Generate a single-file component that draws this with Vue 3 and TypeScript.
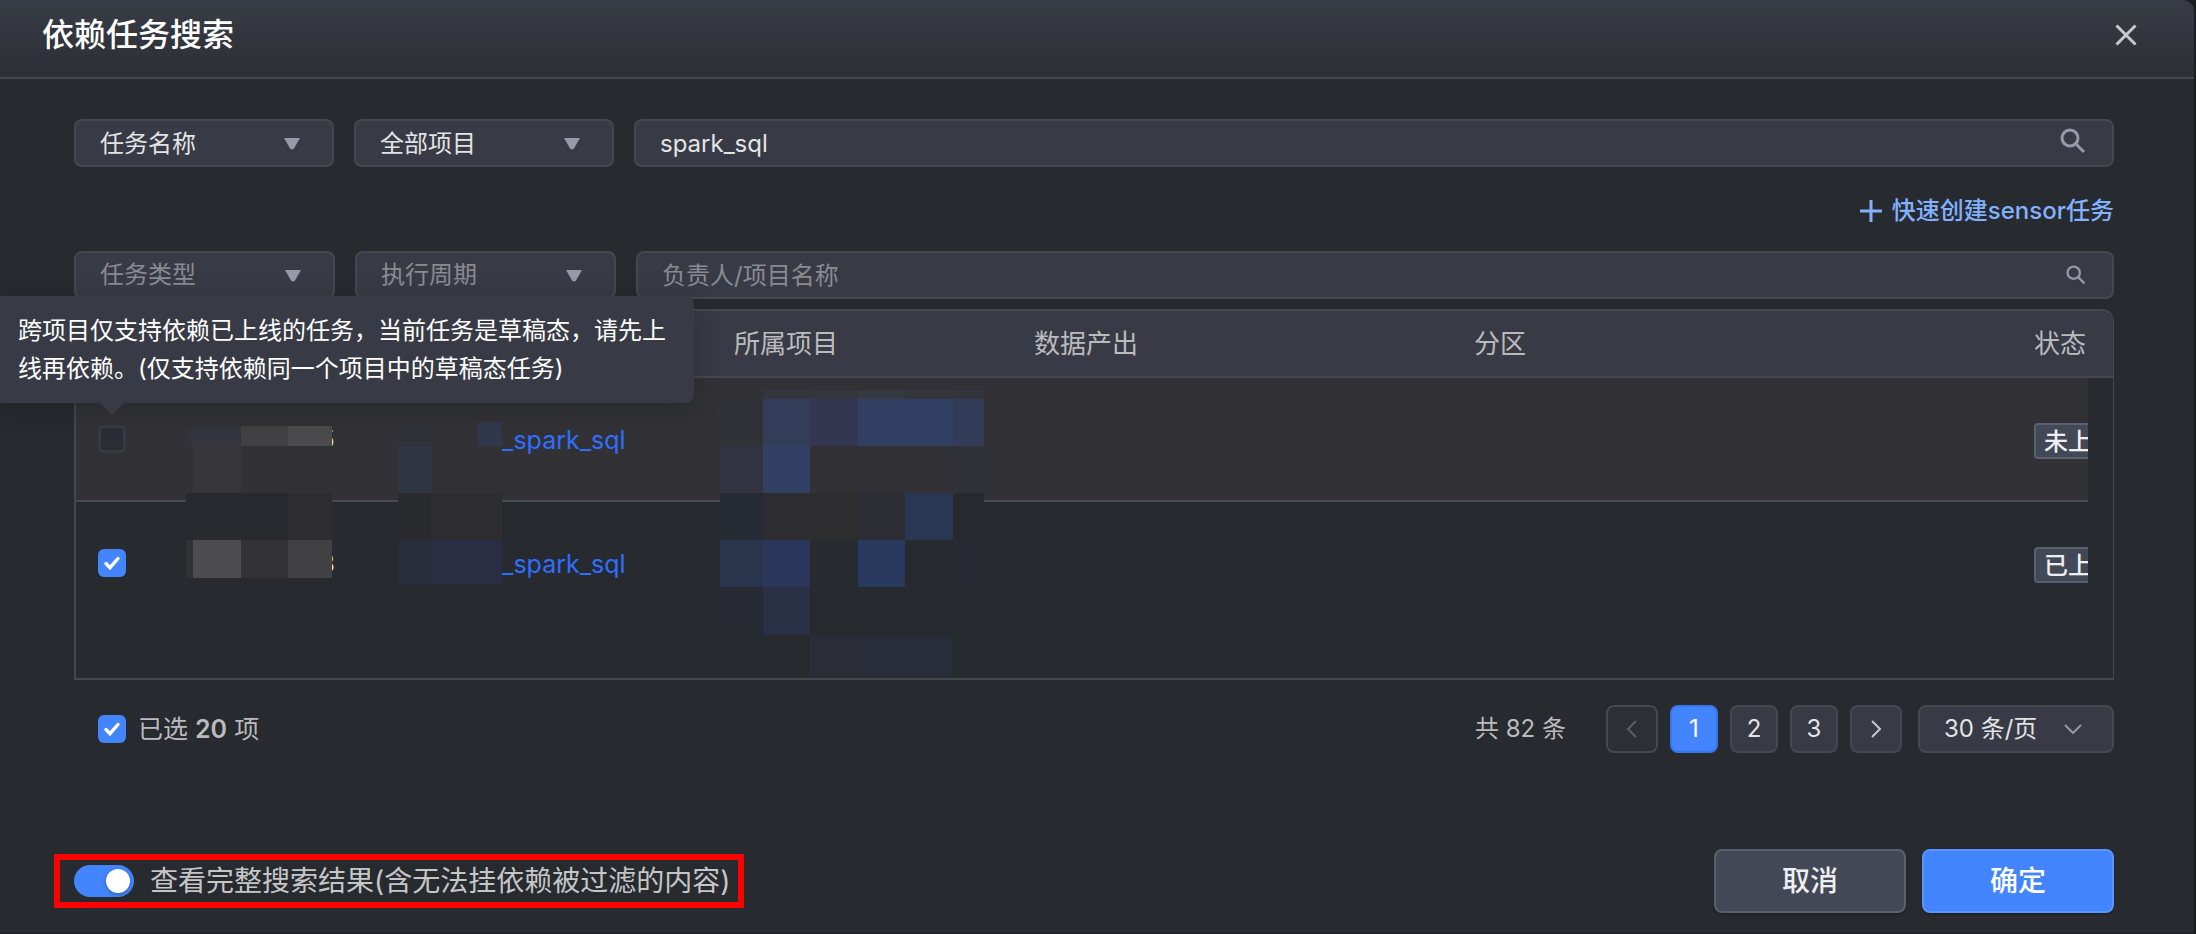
<script setup lang="ts">
import { ref } from 'vue'

interface TaskRow {
  id: string
  name: string
  status: string
  checked: boolean
  disabled: boolean
}

type Block = [x: number, y: number, w: number, h: number, fill: string]

const keyword = ref('spark_sql')
const owner = ref('')
const allChecked = ref(true)
const showAll = ref(true)
const currentPage = ref(1)
const pages = [1, 2, 3]

const rows = ref<TaskRow[]>([
  { id: '5', name: '_spark_sql', status: '未上线', checked: false, disabled: true },
  { id: '8', name: '_spark_sql', status: '已上线', checked: true, disabled: false },
])

// Mosaic blocks that hide the private parts of the rows: x, y, width, height, colour
const mosaic: Block[] = [
  [110, 115, 5, 20, '#343438'],
  [115, 115, 50, 20, '#33353e'],
  [165, 115, 47, 20, '#414144'],
  [212, 115, 44, 20, '#4b4b4e'],
  [110, 135, 7, 47, '#323236'],
  [117, 135, 48, 47, '#37363a'],
  [165, 135, 91, 47, '#323236'],
  [110, 182, 102, 47, '#272a2e'],
  [212, 182, 44, 47, '#2d2d30'],
  [110, 229, 7, 38, '#323235'],
  [117, 229, 48, 38, '#4c4c4e'],
  [165, 229, 47, 38, '#333335'],
  [212, 229, 44, 38, '#414143'],
  [322, 111, 33, 24, '#303239'],
  [355, 111, 47, 24, '#323236'],
  [402, 111, 24, 24, '#31374d'],
  [322, 135, 33, 47, '#2f3543'],
  [355, 135, 71, 47, '#323236'],
  [322, 182, 33, 47, '#292b2e'],
  [355, 182, 71, 47, '#2d2d30'],
  [322, 229, 33, 44, '#282d3b'],
  [355, 229, 71, 44, '#2a2e44'],
  [687, 79, 47, 9, '#33363c'],
  [734, 79, 48, 9, '#33353b'],
  [782, 79, 47, 9, '#373a43'],
  [829, 79, 48, 9, '#34363c'],
  [877, 79, 31, 9, '#33343c'],
  [644, 88, 43, 47, '#303238'],
  [687, 88, 47, 47, '#323d5a'],
  [734, 88, 48, 47, '#333751'],
  [782, 88, 95, 47, '#313f63'],
  [877, 88, 31, 47, '#323c59'],
  [644, 135, 43, 47, '#313440'],
  [687, 135, 47, 47, '#314063'],
  [734, 135, 143, 47, '#323236'],
  [877, 135, 31, 47, '#30323a'],
  [644, 182, 43, 47, '#272b33'],
  [687, 182, 47, 47, '#2d2c30'],
  [734, 182, 48, 47, '#2e2e31'],
  [782, 182, 47, 47, '#2c2d35'],
  [829, 182, 48, 47, '#293654'],
  [877, 182, 31, 47, '#272a2e'],
  [644, 229, 43, 47, '#29354c'],
  [687, 229, 47, 47, '#2a375b'],
  [782, 229, 47, 47, '#2a3a5f'],
  [877, 229, 31, 47, '#282b34'],
  [644, 276, 43, 44, '#272a32'],
  [687, 276, 47, 48, '#2a3146'],
  [734, 324, 48, 41, '#2a2d38'],
  [782, 324, 95, 41, '#282d3a'],
]
</script>

<template>
  <div class="backdrop">
    <section class="dialog" role="dialog" aria-labelledby="dialog-title">
      <header class="head">
        <h1 id="dialog-title">依赖任务搜索</h1>
        <button class="close" type="button" aria-label="关闭">
          <svg viewBox="0 0 24 24" width="24" height="24"><path d="M2.5 2.5l19 19M21.5 2.5l-19 19" /></svg>
        </button>
      </header>

      <main class="body">
        <div class="filters">
          <div class="pick">
            <select aria-label="搜索字段"><option>任务名称</option></select>
            <svg class="caret" viewBox="0 0 16 12" width="16" height="12"><path d="M0 0h16L10 10.500q-2 2-4 0z" /></svg>
          </div>
          <div class="pick">
            <select aria-label="项目"><option>全部项目</option></select>
            <svg class="caret" viewBox="0 0 16 12" width="16" height="12"><path d="M0 0h16L10 10.500q-2 2-4 0z" /></svg>
          </div>
          <div class="search">
            <input v-model="keyword" type="text" aria-label="任务名称" />
            <button type="button" aria-label="搜索" class="big">
              <svg viewBox="0 0 26 26" width="26" height="26"><circle cx="10" cy="10" r="8" /><path d="M15.800 15.800l8.200 8.200" /></svg>
            </button>
          </div>
        </div>

        <div class="create">
          <a href="#">
            <svg viewBox="0 0 22 22" width="22" height="22"><path d="M11 0v22M0 11h22" /></svg>
            <span>快速创建sensor任务</span>
          </a>
        </div>

        <div class="filters sub">
          <div class="pick">
            <select aria-label="任务类型"><option>任务类型</option></select>
            <svg class="caret" viewBox="0 0 16 12" width="16" height="12"><path d="M0 0h16L10 10.500q-2 2-4 0z" /></svg>
          </div>
          <div class="pick">
            <select aria-label="执行周期"><option>执行周期</option></select>
            <svg class="caret" viewBox="0 0 16 12" width="16" height="12"><path d="M0 0h16L10 10.500q-2 2-4 0z" /></svg>
          </div>
          <div class="search">
            <input v-model="owner" type="text" placeholder="负责人/项目名称" aria-label="负责人/项目名称" />
            <button type="button" aria-label="搜索">
              <svg viewBox="0 0 26 26" width="20" height="20"><circle cx="10" cy="10" r="8" /><path d="M15.800 15.800l8.200 8.200" /></svg>
            </button>
          </div>
        </div>

        <div class="table-wrap">
          <table>
            <colgroup>
              <col class="c-check" /><col class="c-id" /><col class="c-name" /><col class="c-project" />
              <col class="c-output" /><col class="c-part" /><col class="c-status" /><col class="c-gutter" />
            </colgroup>
            <thead>
              <tr>
                <th></th><th></th><th></th>
                <th scope="col">所属项目</th>
                <th scope="col">数据产出</th>
                <th scope="col">分区</th>
                <th scope="col">状态</th>
                <th></th>
              </tr>
            </thead>
            <tbody>
              <tr v-for="row in rows" :key="row.id" :class="{ hover: row.disabled }">
                <td class="check">
                  <input v-model="row.checked" type="checkbox" :disabled="row.disabled" aria-label="选择任务" />
                </td>
                <td class="id">{{ row.id }}</td>
                <td class="name"><a href="#">{{ row.name }}</a></td>
                <td></td>
                <td></td>
                <td></td>
                <td class="status"><span class="tag">{{ row.status }}</span></td>
                <td class="gutter"></td>
              </tr>
            </tbody>
          </table>

          <svg class="mosaic" viewBox="0 0 908 367" width="908" height="367" shape-rendering="crispEdges" aria-hidden="true">
            <rect v-for="(b, i) in mosaic" :key="i" :x="b[0]" :y="b[1]" :width="b[2]" :height="b[3]" :fill="b[4]" />
          </svg>

          <div class="tip" role="tooltip">
            跨项目仅支持依赖已上线的任务，当前任务是草稿态，请先上线再依赖。(仅支持依赖同一个项目中的草稿态任务)
          </div>
        </div>

        <div class="bar">
          <label class="picked">
            <input v-model="allChecked" type="checkbox" />
            <span>已选 <b>20</b> 项</span>
          </label>
          <nav class="pager" aria-label="分页">
            <span class="total">共 82 条</span>
            <button type="button" class="arrow" disabled aria-label="上一页">
              <svg viewBox="0 0 12 18" width="12" height="18"><path d="M10 1L2 9l8 8" /></svg>
            </button>
            <button
              v-for="p in pages"
              :key="p"
              type="button"
              :class="{ on: p === currentPage }"
              @click="currentPage = p"
            >{{ p }}</button>
            <button type="button" class="arrow" aria-label="下一页">
              <svg viewBox="0 0 12 18" width="12" height="18"><path d="M2 1l8 8-8 8" /></svg>
            </button>
            <div class="pick size">
              <select aria-label="每页条数"><option>30 条/页</option></select>
              <svg class="chev" viewBox="0 0 18 10" width="18" height="10"><path d="M1 1l8 8 8-8" /></svg>
            </div>
          </nav>
        </div>

        <footer class="foot">
          <label class="toggle">
            <input v-model="showAll" type="checkbox" role="switch" />
            <span>查看完整搜索结果(含无法挂依赖被过滤的内容)</span>
          </label>
          <div class="actions">
            <button type="button">取消</button>
            <button type="button" class="primary">确定</button>
          </div>
        </footer>
      </main>
    </section>
  </div>
</template>

<style>
body {
  margin: 0;
  background: #1c1d21;
}
</style>

<style scoped>
* {
  box-sizing: border-box;
}

.backdrop {
  min-height: 100vh;
  padding: 0 2px 1px 0;
  display: flex;
  background: #1c1d21;
  overflow: hidden;
  font-family: Inter, "Noto Sans CJK SC", sans-serif;
  font-size: 24px;
  line-height: 36px;
  color: #e3e4e6;
}

.dialog {
  flex: 1;
  min-width: 0;
  background: #272a2e;
  border-radius: 0 12px 0 0;
}

button,
select,
input {
  font: inherit;
  color: inherit;
  margin: 0;
}

button {
  cursor: pointer;
  padding: 0;
}

svg {
  display: block;
  fill: none;
}

.head {
  height: 79px;
  padding: 0 56px 7px 42px;
  display: flex;
  align-items: center;
  justify-content: space-between;
  border-bottom: 2px solid #444850;
  border-radius: 0 12px 0 0;
  background: linear-gradient(#383c46, #2c2f34);
}

h1 {
  margin: 0;
  font-size: 32px;
  line-height: 48px;
  font-weight: 500;
  color: #fff;
}

.close {
  border: 0;
  background: none;
  stroke: #c8c9cc;
  stroke-width: 3;
}

.body {
  padding: 40px 80px 20px 74px;
}

.filters {
  display: flex;
  gap: 20px;
}

.pick {
  display: grid;
  align-items: center;
  flex: 0 0 260px;
}

.sub .pick {
  flex-basis: 261px;
}

.pick > * {
  grid-area: 1 / 1;
}

.pick select {
  appearance: none;
  width: 100%;
  height: 48px;
  padding: 2px 24px 0;
  border: 2px solid #444850;
  border-radius: 8px;
  background: #383b45;
  outline: none;
}

.sub .pick select {
  padding-top: 0;
  color: #898b92;
}

.caret {
  justify-self: end;
  margin: 2px 34px 0 0;
  fill: #9799a8;
  pointer-events: none;
}

.search {
  flex: 1;
  display: flex;
  align-items: center;
  height: 48px;
  padding: 0 26px 0 24px;
  border: 2px solid #444850;
  border-radius: 8px;
  background: #383b45;
}

.search input {
  flex: 1;
  min-width: 0;
  padding: 2px 0 0;
  border: 0;
  outline: 0;
  background: none;
}

.search input::placeholder {
  color: #898b92;
  opacity: 1;
}

.search button {
  border: 0;
  background: none;
  stroke: #9799a8;
  stroke-width: 3;
}

.search .big {
  padding-bottom: 4px;
}

.create {
  display: flex;
  justify-content: flex-end;
  padding: 26px 0 22px;
}

.create a {
  display: flex;
  align-items: center;
  gap: 10px;
  color: #82b1ff;
  font-weight: 500;
  text-decoration: none;
}

.create svg {
  stroke: #82b1ff;
  stroke-width: 3;
}

.table-wrap {
  position: relative;
  margin-top: 10px;
  padding-bottom: 54px;
  border: 2px solid #444850;
  border-right-width: 1px;
  border-radius: 12px 12px 0 0;
}

table {
  width: 100%;
  table-layout: fixed;
  border-collapse: separate;
  border-spacing: 0;
}

.c-check { width: 92px; }
.c-id { width: 212px; }
.c-name { width: 330px; }
.c-project { width: 300px; }
.c-part { width: 560px; }
.c-status { width: 78px; }
.c-gutter { width: 25px; }

th {
  height: 67px;
  padding: 0 0 0 24px;
  text-align: left;
  font-size: 26px;
  font-weight: 400;
  color: #babbbe;
  white-space: nowrap;
  background: #383b45;
  border-bottom: 2px solid #444850;
}

th:last-child {
  padding: 0;
  border-top-right-radius: 10px;
}

td {
  height: 122px;
  padding: 0;
  white-space: nowrap;
  overflow: hidden;
}

.hover td {
  height: 124px;
  background: #323236;
  border-bottom: 2px solid #444b54;
}

.hover td.gutter {
  background: #272a2e;
  border: 0;
}

.check {
  padding-left: 22px;
}

td.id {
  padding: 2px 0 0 152px;
}

td.name {
  padding: 2px 0 0 122px;
}

.name a {
  font-size: 25px;
  color: #2f6fff;
  text-decoration: none;
}

td.status {
  padding: 4px 0 0 24px;
}

.tag {
  display: block;
  width: 92px;
  height: 36px;
  padding: 0 8px;
  line-height: 34px;
  border: 2px solid #596070;
  border-radius: 4px;
  background: #434856;
  color: #eeeff1;
  font-weight: 500;
}

input[type="checkbox"] {
  appearance: none;
  display: block;
  flex: none;
  width: 28px;
  height: 28px;
  border: 3px solid #373b40;
  border-radius: 6px;
  background: #2a2d35;
}

input[type="checkbox"]:checked {
  border: 0;
  background: #4285ff url("data:image/svg+xml,%3Csvg xmlns='http://www.w3.org/2000/svg' viewBox='0 0 28 28'%3E%3Cpath d='M8 14.500l4 4.200 8-9.200' fill='none' stroke='white' stroke-width='3.400' stroke-linecap='round'/%3E%3C/svg%3E");
}

.mosaic {
  position: absolute;
  left: 0;
  top: 0;
  pointer-events: none;
}

.tip {
  position: absolute;
  left: -76px;
  top: -15px;
  width: 694px;
  padding: 16px 24px 15px 18px;
  line-height: 38px;
  border-radius: 0 8px 8px 0;
  background: #383b45;
  color: #fff;
  box-shadow: 0 6px 24px rgba(20, 24, 28, 0.3);
}

.tip::after {
  content: "";
  position: absolute;
  left: 100px;
  top: 100%;
  border: 12px solid transparent;
  border-top-color: #383b45;
  border-bottom: 0;
}

.bar {
  display: flex;
  align-items: center;
  justify-content: space-between;
  margin-top: 25px;
}

.picked {
  display: flex;
  align-items: center;
  gap: 12px;
  padding-left: 24px;
  font-size: 25px;
  color: #babbbe;
}

.picked b {
  font-weight: 600;
}

.pager {
  display: flex;
  align-items: center;
  gap: 12px;
}

.total {
  margin-right: 28px;
  color: #babbbe;
}

.pager button {
  width: 48px;
  height: 48px;
  border: 2px solid #444850;
  border-radius: 8px;
  background: #383b45;
}

.pager .arrow {
  width: 52px;
  display: grid;
  place-items: center;
  stroke: #c8c9cc;
  stroke-width: 2;
}

.pager .arrow:disabled {
  background: #2c2f36;
  stroke: #5c5f66;
}

.pager button.on {
  border-color: #3675ec;
  background: #4285ff;
  color: #fff;
}

.pick.size {
  flex-basis: 196px;
  margin-left: 4px;
}

.size select {
  padding-top: 0;
}

.chev {
  justify-self: end;
  margin-right: 32px;
  stroke: #9799a0;
  stroke-width: 2;
  pointer-events: none;
}

.foot {
  display: flex;
  align-items: center;
  justify-content: space-between;
  margin-top: 96px;
}

.toggle {
  display: flex;
  align-items: center;
  gap: 16px;
  height: 54px;
  margin-left: -20px;
  padding: 0 8px 0 14px;
  border: 6px solid #f00;
  font-size: 28px;
  color: #c5c6c8;
  white-space: nowrap;
}

.toggle input[type="checkbox"] {
  width: 60px;
  height: 32px;
  border: 0;
  border-radius: 16px;
  background: #4b5160;
}

.toggle input[type="checkbox"]::before {
  content: "";
  display: block;
  width: 24px;
  height: 24px;
  margin: 4px;
  border-radius: 50%;
  background: #fff;
  box-shadow: 0 2px 4px rgba(0, 35, 11, 0.3);
}

.toggle input[type="checkbox"]:checked {
  background: #4285ff;
}

.toggle input[type="checkbox"]:checked::before {
  margin-left: 32px;
}

.actions {
  display: flex;
  gap: 16px;
}

.actions button {
  width: 192px;
  height: 64px;
  border: 2px solid #596070;
  border-radius: 8px;
  background: #434856;
  box-shadow: 0 2px 2px rgba(0, 0, 0, 0.2);
  font-size: 28px;
  font-weight: 500;
  color: #eeeff1;
}

.actions .primary {
  border-color: #5a94ff;
  background: #4285ff;
  color: #fff;
}
</style>
